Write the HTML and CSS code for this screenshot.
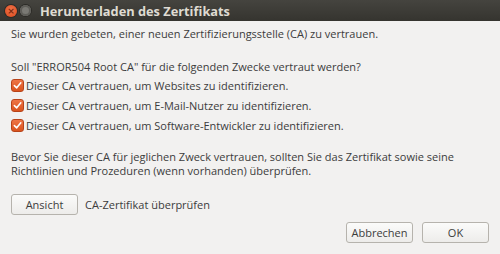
FILE: index.html
```html
<!DOCTYPE html>
<html lang="de">
<head>
    <meta charset="UTF-8">
    <title>Herunterladen des Zertifikats</title>
    <link rel="stylesheet" href="styles.css">
</head>
<body>
    <div class="window">
        <div class="titlebar">
            <span class="btn-close">×</span>
            <span class="btn-min"></span>
            <span class="title">Herunterladen des Zertifikats</span>
        </div>

        <div class="content">
            <p class="intro">Sie wurden gebeten, einer neuen Zertifizierungsstelle (CA) zu vertrauen.</p>

            <p class="question">Soll "ERROR504 Root CA" für die folgenden Zwecke vertraut werden?</p>

            <div class="checks">
                <label class="check"><span class="box"><svg viewBox="0 0 14 14"><path d="M3 7.2 L6 10 L11.2 3.6" /></svg></span>Dieser CA vertrauen, um Websites zu identifizieren.</label>
                <label class="check"><span class="box"><svg viewBox="0 0 14 14"><path d="M3 7.2 L6 10 L11.2 3.6" /></svg></span>Dieser CA vertrauen, um E-Mail-Nutzer zu identifizieren.</label>
                <label class="check"><span class="box"><svg viewBox="0 0 14 14"><path d="M3 7.2 L6 10 L11.2 3.6" /></svg></span>Dieser CA vertrauen, um Software-Entwickler zu identifizieren.</label>
            </div>

            <p class="note">Bevor Sie dieser CA für jeglichen Zweck vertrauen, sollten Sie das Zertifikat sowie seine Richtlinien und Prozeduren (wenn vorhanden) überprüfen.</p>

            <div class="view-row">
                <button class="btn btn-view">Ansicht</button>
                <span>CA-Zertifikat überprüfen</span>
            </div>

            <div class="actions">
                <button class="btn">Abbrechen</button>
                <button class="btn">OK</button>
            </div>
        </div>
    </div>
</body>
</html>
```

FILE: styles.css
```css
body {
    margin: 0;
    padding: 0;
    width: 500px;
    height: 254px;
    overflow: hidden;
    background: #f2f1f0;
    font-family: "Open Sans", "DejaVu Sans", sans-serif;
    font-size: 11px;
    color: #3c3c3c;
}

.window {
    width: 500px;
    height: 254px;
}

.titlebar {
    height: 21px;
    background: linear-gradient(#45443f, #35342f);
    display: flex;
    align-items: center;
    padding-left: 5px;
    box-sizing: border-box;
}

.btn-close {
    width: 12px;
    height: 12px;
    border-radius: 50%;
    background: radial-gradient(circle at 50% 40%, #f3744a, #d8481c);
    color: #7a2a10;
    font-size: 9px;
    line-height: 12px;
    text-align: center;
    font-family: "DejaVu Sans", sans-serif;
    font-weight: bold;
    box-shadow: 0 0 0 1px #2c2b27;
}

.btn-min {
    width: 11px;
    height: 11px;
    border-radius: 50%;
    background: #7a7974;
    margin-left: 3px;
    box-shadow: inset 0 0 0 2px #5e5d58, 0 0 0 1px #2c2b27;
}

.title {
    margin-left: 9px;
    color: #dfdbd2;
    font-weight: bold;
    font-size: 12.8px;
}

.content {
    padding: 0 11px;
}

p {
    margin: 0;
}

.intro {
    margin-top: 6px;
    line-height: 14px;
}

.question {
    margin-top: 19px;
    line-height: 14px;
}

.checks {
    margin-top: 4px;
    display: flex;
    flex-direction: column;
    gap: 5px;
}

.check {
    display: flex;
    align-items: center;
    line-height: 15px;
}

.box {
    width: 13px;
    height: 13px;
    border-radius: 3px;
    background: linear-gradient(#ef7546, #d9541f);
    border: 1px solid #b8441a;
    box-sizing: border-box;
    margin-right: 2px;
    display: flex;
}

.box svg {
    width: 11px;
    height: 11px;
}

.box path {
    fill: none;
    stroke: #fff;
    stroke-width: 2;
    stroke-linecap: round;
    stroke-linejoin: round;
}

.note {
    margin-top: 17px;
    line-height: 14px;
}

.view-row {
    margin-top: 16px;
    display: flex;
    align-items: center;
    gap: 7px;
}

.btn {
    font-family: inherit;
    font-size: 11px;
    color: #3c3c3c;
    background: linear-gradient(#fbfbfa, #edecea);
    border: 1px solid #b6b3ad;
    border-radius: 3px;
    height: 21px;
    width: 67px;
    padding: 0;
}

.actions {
    margin-top: 7px;
    display: flex;
    justify-content: flex-end;
    gap: 9px;
}
```
